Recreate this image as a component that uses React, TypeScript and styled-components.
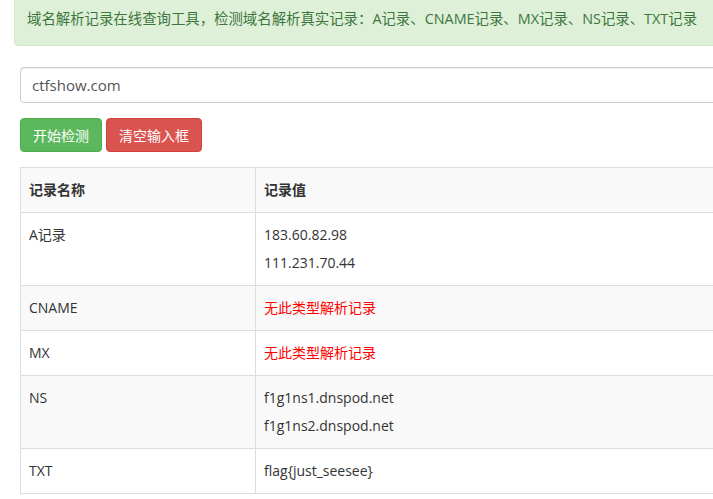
import styled, { createGlobalStyle } from "styled-components";

const GlobalStyle = createGlobalStyle`
  html, body { margin: 0; padding: 0; background: #fff; overflow: hidden; }
  body {
    font-family: "Open Sans", "Noto Sans CJK SC", sans-serif;
    font-size: 14px;
    color: #333;
  }
`;

const Viewport = styled.div`
  width: 100vw;
  height: 100vh;
  overflow: hidden;
`;

const Page = styled.div`
  width: 1000px;
  padding: 0 0 0 14px;
`;

const Alert = styled.div`
  margin-top: -7px;
  padding: 15px 12px 16px;
  background: #dff0d8;
  border: 1px solid #d6e9c6;
  border-radius: 4px;
  color: #3c763d;
  font-size: 14.4px;
  line-height: 20px;
`;

const Form = styled.div`
  padding: 21px 6px 0;
`;

const Input = styled.input`
  display: block;
  box-sizing: border-box;
  width: 100%;
  height: 36px;
  padding: 6px 11px;
  border: 1px solid #ccc;
  border-radius: 4px;
  box-shadow: inset 0 1px 1px rgba(0, 0, 0, 0.075);
  font: inherit;
  font-size: 15px;
  color: #555;
  outline: none;
`;

const Actions = styled.div`
  display: flex;
  gap: 4px;
  margin-top: 15px;
`;

const Button = styled.button<{ $tone: "success" | "danger" }>`
  height: 34px;
  padding: 0 12px;
  border-radius: 4px;
  border: 1px solid ${({ $tone }) => ($tone === "success" ? "#4cae4c" : "#d43f3a")};
  background: ${({ $tone }) => ($tone === "success" ? "#5cb85c" : "#d9534f")};
  color: #fff;
  font: inherit;
  font-size: 14px;
  cursor: pointer;
`;

const Table = styled.table`
  margin-top: 15px;
  width: 100%;
  border-collapse: collapse;
  border: 1px solid #ddd;
  line-height: 28px;
`;

const Row = styled.tr<{ $striped?: boolean }>`
  background: ${({ $striped }) => ($striped ? "#f9f9f9" : "#fff")};
`;

const Th = styled.th`
  text-align: left;
  font-weight: bold;
  padding: 8px;
  border: 1px solid #ddd;
`;

const Td = styled.td<{ $alert?: boolean }>`
  vertical-align: top;
  padding: 8px;
  border: 1px solid #ddd;
  color: ${({ $alert }) => ($alert ? "#f00" : "#333")};
`;

const NameCol = styled.col`
  width: 235px;
`;

const Line = styled.div``;

type Rec = { name: string; values: string[] | null };

const records: Rec[] = [
  { name: "A记录", values: ["183.60.82.98", "111.231.70.44"] },
  { name: "CNAME", values: null },
  { name: "MX", values: null },
  { name: "NS", values: ["f1g1ns1.dnspod.net", "f1g1ns2.dnspod.net"] },
  { name: "TXT", values: ["flag{just_seesee}"] },
];

export default function App() {
  return (
    <>
      <GlobalStyle />
      <Viewport>
        <Page>
          <Alert>
            域名解析记录在线查询工具，检测域名解析真实记录：A记录、CNAME记录、MX记录、NS记录、TXT记录
          </Alert>
          <Form>
            <Input defaultValue="ctfshow.com" />
            <Actions>
              <Button $tone="success">开始检测</Button>
              <Button $tone="danger">清空输入框</Button>
            </Actions>
            <Table>
              <colgroup>
                <NameCol />
                <col />
              </colgroup>
              <thead>
                <Row $striped>
                  <Th>记录名称</Th>
                  <Th>记录值</Th>
                </Row>
              </thead>
              <tbody>
                {records.map((r, i) => (
                  <Row key={r.name} $striped={i % 2 === 1}>
                    <Td>{r.name}</Td>
                    <Td $alert={!r.values}>
                      {r.values ? r.values.map((v) => <Line key={v}>{v}</Line>) : "无此类型解析记录"}
                    </Td>
                  </Row>
                ))}
              </tbody>
            </Table>
          </Form>
        </Page>
      </Viewport>
    </>
  );
}
